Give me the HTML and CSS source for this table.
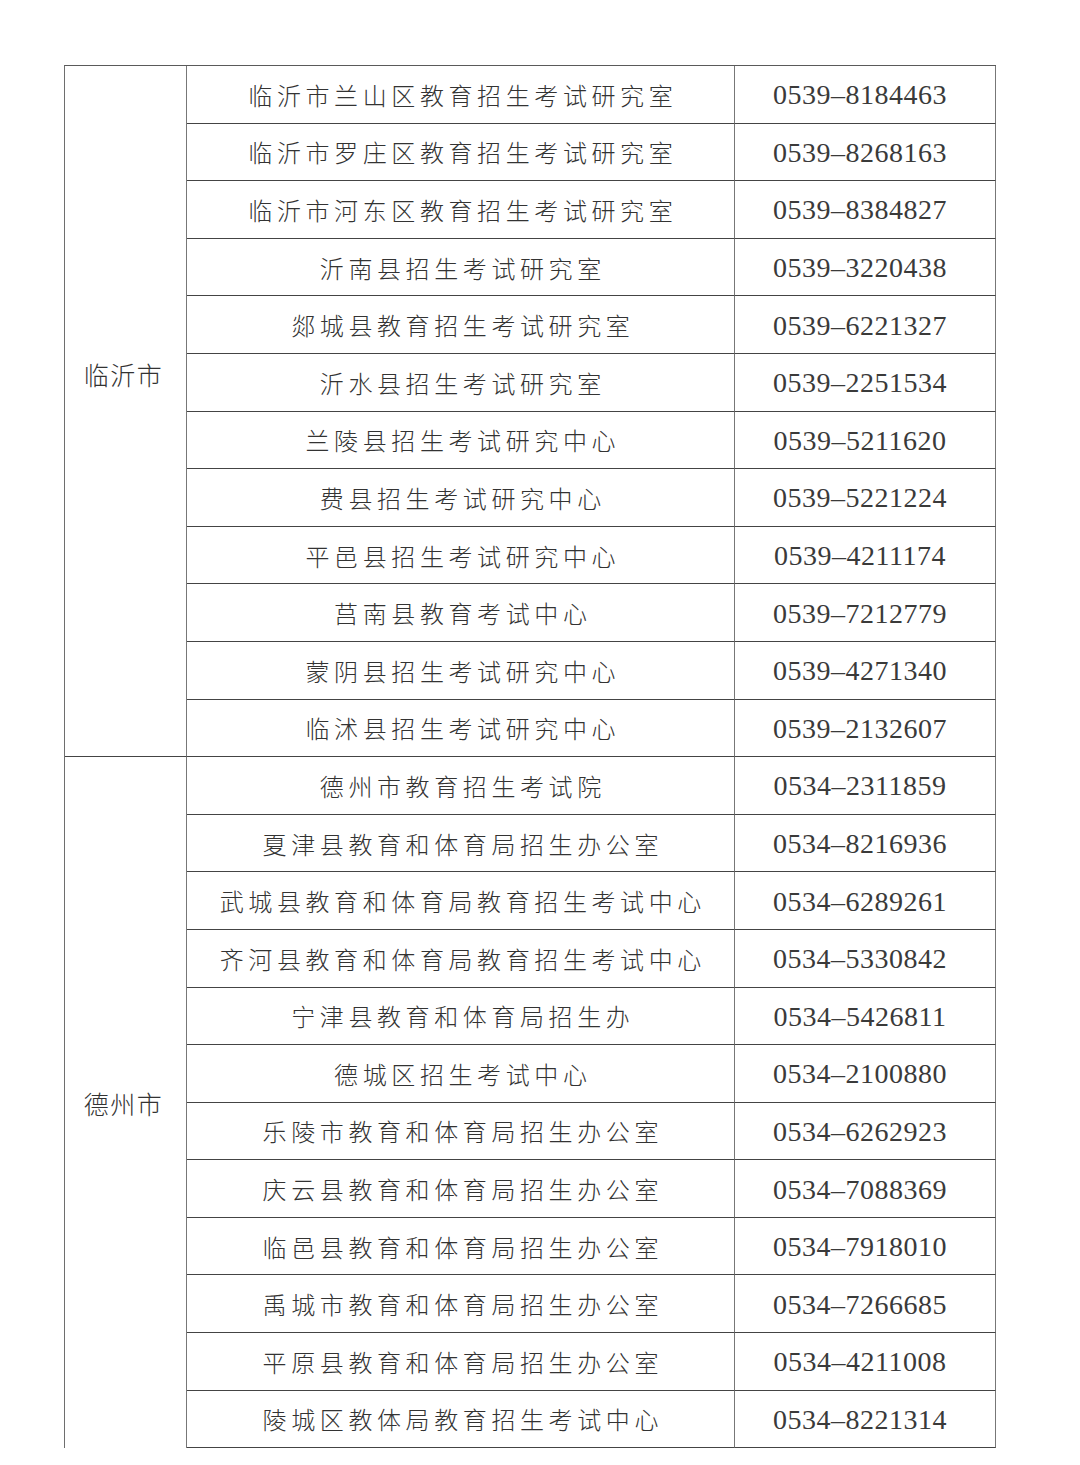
FILE: index.html
```html
<!DOCTYPE html>
<html lang="zh-CN">
<head>
<meta charset="utf-8">
<title>招生考试机构联系电话</title>
<link rel="stylesheet" href="styles.css">
</head>
<body>
<div class="sheet">
  <div class="city city-linyi"><span>临沂市</span></div>
  <div class="org">临沂市兰山区教育招生考试研究室</div><div class="tel">0539–8184463</div>
  <div class="org">临沂市罗庄区教育招生考试研究室</div><div class="tel">0539–8268163</div>
  <div class="org">临沂市河东区教育招生考试研究室</div><div class="tel">0539–8384827</div>
  <div class="org">沂南县招生考试研究室</div><div class="tel">0539–3220438</div>
  <div class="org">郯城县教育招生考试研究室</div><div class="tel">0539–6221327</div>
  <div class="org">沂水县招生考试研究室</div><div class="tel">0539–2251534</div>
  <div class="org">兰陵县招生考试研究中心</div><div class="tel">0539–5211620</div>
  <div class="org">费县招生考试研究中心</div><div class="tel">0539–5221224</div>
  <div class="org">平邑县招生考试研究中心</div><div class="tel">0539–4211174</div>
  <div class="org">莒南县教育考试中心</div><div class="tel">0539–7212779</div>
  <div class="org">蒙阴县招生考试研究中心</div><div class="tel">0539–4271340</div>
  <div class="org">临沭县招生考试研究中心</div><div class="tel">0539–2132607</div>
  <div class="city city-dezhou"><span>德州市</span></div>
  <div class="org">德州市教育招生考试院</div><div class="tel">0534–2311859</div>
  <div class="org">夏津县教育和体育局招生办公室</div><div class="tel">0534–8216936</div>
  <div class="org">武城县教育和体育局教育招生考试中心</div><div class="tel">0534–6289261</div>
  <div class="org">齐河县教育和体育局教育招生考试中心</div><div class="tel">0534–5330842</div>
  <div class="org">宁津县教育和体育局招生办</div><div class="tel">0534–5426811</div>
  <div class="org">德城区招生考试中心</div><div class="tel">0534–2100880</div>
  <div class="org">乐陵市教育和体育局招生办公室</div><div class="tel">0534–6262923</div>
  <div class="org">庆云县教育和体育局招生办公室</div><div class="tel">0534–7088369</div>
  <div class="org">临邑县教育和体育局招生办公室</div><div class="tel">0534–7918010</div>
  <div class="org">禹城市教育和体育局招生办公室</div><div class="tel">0534–7266685</div>
  <div class="org">平原县教育和体育局招生办公室</div><div class="tel">0534–4211008</div>
  <div class="org">陵城区教体局教育招生考试中心</div><div class="tel">0534–8221314</div>
</div>
</body>
</html>
```
FILE: styles.css
```css
html, body {
  margin: 0;
  padding: 0;
  background: #ffffff;
}
body {
  width: 1080px;
  height: 1465px;
  overflow: hidden;
}
.sheet {
  margin: 65px 0 0 64px;
  width: 932px;
  display: grid;
  grid-template-columns: 122px 548px 261px;
  grid-template-rows: repeat(24, 57.6px);
  border-left: 1px solid #6e6e6e;
  border-top: 1px solid #5a5a5a;
  box-sizing: border-box;
  color: #333333;
}
.city, .org, .tel {
  box-sizing: border-box;
  border-right: 1px solid #777777;
  border-bottom: 1px solid #444444;
  display: flex;
  align-items: center;
  justify-content: center;
}
.city {
  grid-column: 1;
  font-family: "Noto Sans CJK SC", "Noto Sans", sans-serif;
  font-weight: 300;
  font-size: 25px;
  letter-spacing: 1.5px;
  padding-right: 4px;
}
.city-linyi {
  grid-row: 1 / span 12;
  padding-bottom: 74px;
}
.city-dezhou {
  grid-row: 13 / span 12;
  border-bottom: none;
}
.org {
  grid-column: 2;
  font-family: "Noto Sans CJK SC", "Noto Sans", sans-serif;
  font-weight: 300;
  font-size: 24px;
  letter-spacing: 4.6px;
  padding-left: 4.6px;
  white-space: nowrap;
}
.tel {
  grid-column: 3;
  font-family: "Liberation Serif", "Times New Roman", serif;
  font-size: 28px;
  letter-spacing: 0.5px;
  padding-top: 2px;
  padding-right: 10px;
  color: #3a3a3a;
  white-space: nowrap;
}
```
